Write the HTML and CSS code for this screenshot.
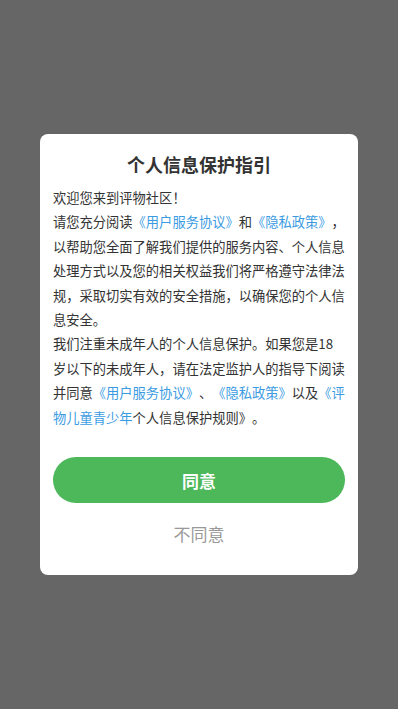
FILE: index.html
```html
<!DOCTYPE html>
<html lang="zh-CN">
<head>
  <meta charset="UTF-8" />
  <meta name="viewport" content="width=device-width, initial-scale=1.0" />
  <title>个人信息保护指引</title>
  <link rel="stylesheet" href="styles.css">
</head>
<body>
  <div class="mask">
    <div class="dialog">
      <h2 class="title">个人信息保护指引</h2>
      <div class="content">
        <p>欢迎您来到评物社区！</p>
        <p>请您充分阅读<a href="#">《用户服务协议》</a>和<a href="#">《隐私政策》</a>，以帮助您全面了解我们提供的服务内容、个人信息处理方式以及您的相关权益我们将严格遵守法律法规，采取切实有效的安全措施，以确保您的个人信息安全。</p>
        <p>我们注重未成年人的个人信息保护。如果您是18岁以下的未成年人，请在法定监护人的指导下阅读并同意<a href="#">《用户服务协议》</a>、<a href="#">《隐私政策》</a>以及<a href="#">《评物儿童青少年</a>个人信息保护规则》。</p>
      </div>
      <button class="agree-btn">同意</button>
      <button class="reject-btn">不同意</button>
    </div>
  </div>
</body>
</html>
```

FILE: styles.css
```css
* {
  box-sizing: border-box;
}

body {
  margin: 0;
  font-family: "Noto Sans CJK SC", "Noto Sans", sans-serif;
  background: #666666;
  color: #333;
}

.mask {
  min-height: 100vh;
  display: flex;
  justify-content: center;
  align-items: flex-start;
  padding-top: 134px;
}

.dialog {
  width: 318px;
  background: #fff;
  border-radius: 8px;
  padding: 18px 13px 29px;
  display: flex;
  flex-direction: column;
}

.title {
  margin: 0 0 10px;
  font-size: 18px;
  line-height: 24px;
  font-weight: bold;
  text-align: center;
  color: #333;
}

.content {
  width: 292px;
}

.content p {
  margin: 0;
  font-size: 13.27px;
  line-height: 24.4px;
  color: #333;
  text-spacing-trim: space-all;
}

.content a {
  color: #3a9be2;
  text-decoration: none;
}

.agree-btn {
  margin-top: 27px;
  height: 46px;
  border: none;
  border-radius: 23px;
  background: #4cb85a;
  color: #fff;
  font-family: inherit;
  font-size: 17px;
  font-weight: bold;
  cursor: pointer;
}

.reject-btn {
  margin-top: 19px;
  border: none;
  background: none;
  padding: 0;
  color: #999;
  font-family: inherit;
  font-size: 17px;
  line-height: 24px;
  cursor: pointer;
}
```
